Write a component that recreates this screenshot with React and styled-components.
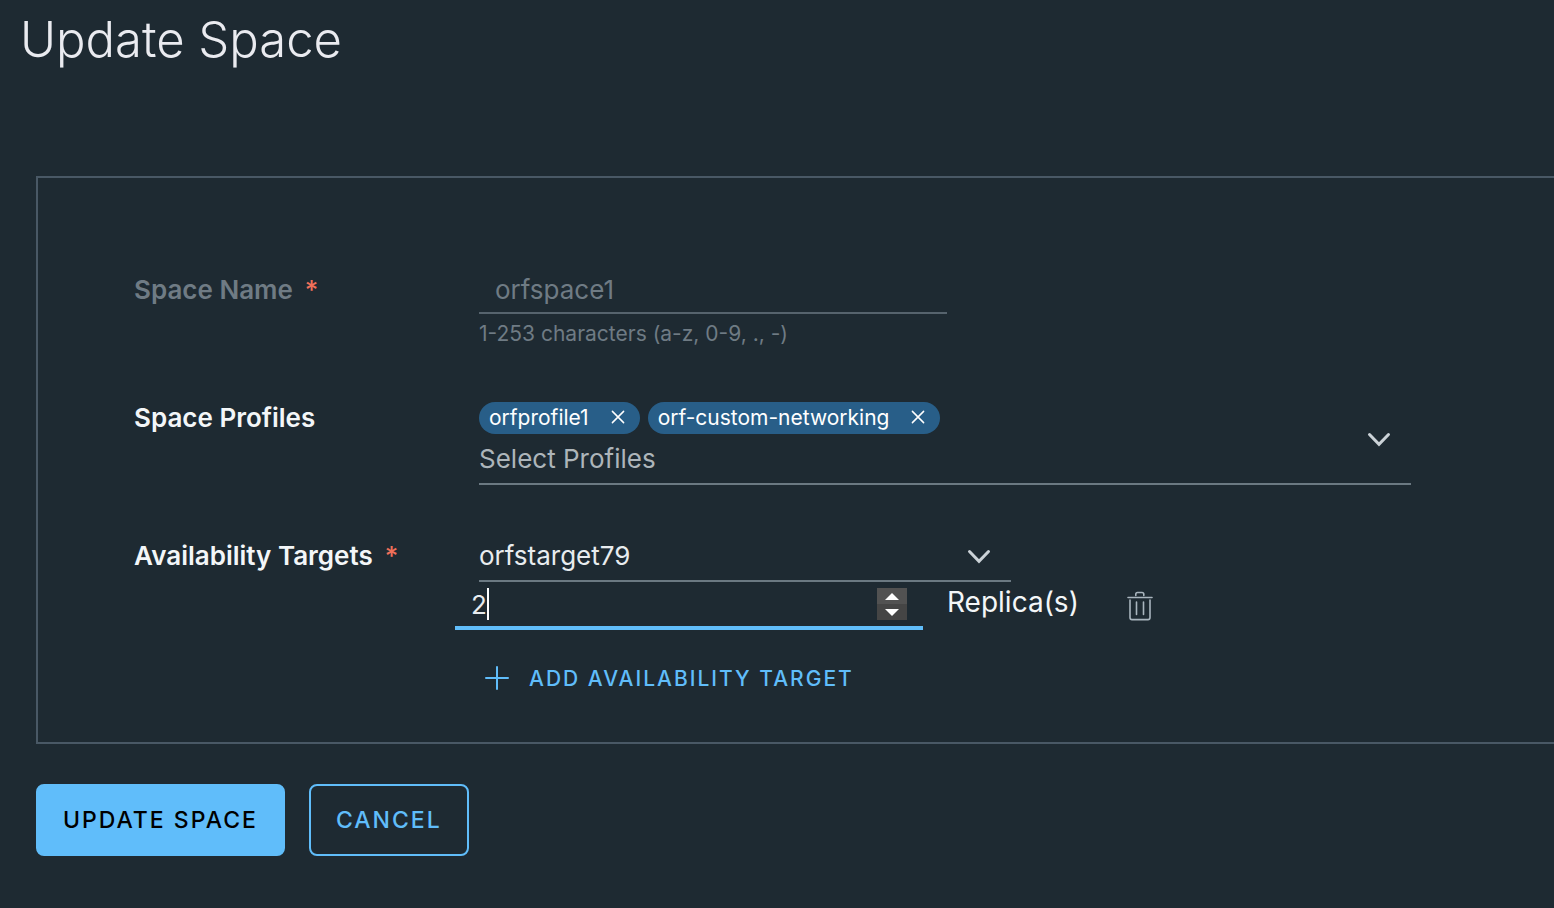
import React, { useState } from "react";
import styled, { createGlobalStyle } from "styled-components";

const GlobalStyle = createGlobalStyle`
  * { box-sizing: border-box; }
  body {
    margin: 0;
    background: #1e2a32;
    color: #f3f6f8;
    font-family: Inter, "Noto Sans", sans-serif;
    font-size: 26px;
  }
  button, input, select { font: inherit; color: inherit; }
`;

const Page = styled.main`
  min-height: 100vh;
  padding: 16px 0 48px 36px;
`;

const Title = styled.h1`
  margin: 0 0 112px -16px;
  color: #eaebf0;
  font-size: 49px;
  line-height: 48px;
  font-weight: 300;
`;

const Panel = styled.section`
  border: 2px solid #495865;
  border-right: 0;
  padding: 88px 24px 40px 96px;
`;

const Field = styled.div`
  display: grid;
  grid-template-columns: 345px minmax(0, 1fr);
  margin-bottom: ${(p) => p.$gap || 0}px;
`;

const Label = styled.label`
  display: flex;
  gap: 12px;
  padding-top: ${(p) => p.$top || 0}px;
  line-height: 32px;
  font-weight: 600;
  color: ${(p) => (p.$muted ? "#6f7b84" : "#f3f6f8")};
`;

const Star = styled.span`
  color: #f0705a;
  font-weight: 500;
`;

const TextInput = styled.input`
  display: block;
  width: 100%;
  max-width: 468px;
  height: 48px;
  padding: 0 16px;
  border: 0;
  border-bottom: 2px solid #56636d;
  background: transparent;
  color: #6f7b84;
  outline: none;
`;

const Hint = styled.p`
  margin: 4px 0 0;
  color: #6f7b84;
  font-size: 21px;
  line-height: 32px;
`;

const Combo = styled.div`
  display: flex;
  align-items: center;
  width: 100%;
  max-width: 932px;
  padding-right: 20px;
  border-bottom: 2px solid #6b7982;
`;

const ComboBody = styled.div`
  flex: 1;
  min-width: 0;
`;

const Chips = styled.div`
  display: flex;
  flex-wrap: wrap;
  gap: 8px;
`;

const Chip = styled.span`
  display: flex;
  align-items: center;
  gap: 21px;
  height: 32px;
  padding: 0 14px 0 10px;
  border-radius: 16px;
  background: #285e88;
  color: #fff;
  font-size: 21px;
  line-height: 32px;
`;

const IconButton = styled.button`
  display: flex;
  align-items: center;
  padding: 0;
  border: 0;
  background: none;
  color: ${(p) => p.$color || "inherit"};
  cursor: pointer;
`;

const ComboToggle = styled(IconButton)`
  padding-bottom: 8px;
`;

const ComboInput = styled.input`
  display: block;
  width: 100%;
  height: 49px;
  padding: 0;
  border: 0;
  background: transparent;
  outline: none;
  &::placeholder { color: #adb5ba; opacity: 1; }
`;

const SelectBox = styled.div`
  display: grid;
  align-items: center;
  max-width: 532px;
  border-bottom: 2px solid #6b7982;
  > * { grid-area: 1 / 1; }
  > svg { justify-self: end; margin-right: 20px; pointer-events: none; }
`;

const Select = styled.select`
  width: 100%;
  height: 48px;
  padding: 0 48px 2px 0;
  border: 0;
  background: transparent;
  color: #e8ecef;
  appearance: none;
  outline: none;
`;

const ReplicaRow = styled.div`
  display: flex;
  gap: 24px;
  margin-left: -24px;
`;

const NumberBox = styled.div`
  display: flex;
  align-items: center;
  width: 468px;
  height: 48px;
  padding: 0 16px;
  border-bottom: 4px solid #60bdfa;
`;

const NumberInput = styled.input`
  field-sizing: content;
  padding: 0;
  border: 0;
  background: transparent;
  color: #e8ecef;
  outline: none;
  caret-color: transparent;
  appearance: textfield;
  &::-webkit-inner-spin-button { display: none; }
`;

const Caret = styled.span`
  width: 2px;
  height: 32px;
  background: #fff;
`;

const Stepper = styled.div`
  display: grid;
  margin-left: auto;
`;

const Step = styled.button`
  display: flex;
  align-items: center;
  justify-content: center;
  width: 30px;
  height: 16px;
  padding: 0;
  border: 0;
  background: ${(p) => (p.$down ? "#454545" : "#525252")};
  color: #fff;
`;

const Unit = styled.label`
  padding-right: 24px;
  font-size: 28px;
  line-height: 40px;
`;

const AddButton = styled.button`
  display: flex;
  align-items: center;
  gap: 20px;
  height: 48px;
  margin: 24px 0 0;
  padding: 0 6px;
  border: 0;
  background: none;
  color: #60bdfa;
  font-size: 21px;
  font-weight: 500;
  letter-spacing: 2px;
  cursor: pointer;
`;

const Actions = styled.div`
  display: flex;
  gap: 24px;
  margin-top: 40px;
`;

const Button = styled.button`
  height: 72px;
  padding: 0 25px;
  border: 2px solid #60bdfa;
  border-radius: 8px;
  background: ${(p) => (p.$primary ? "#60bdfa" : "transparent")};
  color: ${(p) => (p.$primary ? "#000" : "#60bdfa")};
  font-size: 23px;
  font-weight: 500;
  letter-spacing: 2px;
  cursor: pointer;
`;

const Chevron = () => (
  <svg width="24" height="16" viewBox="0 0 24 16" fill="none" stroke="#cbd2d7" strokeWidth="3" strokeLinecap="round">
    <path d="M2.5 3.5 L12 13.3 L21.5 3.5" />
  </svg>
);

const Cross = () => (
  <svg width="16" height="16" viewBox="0 0 16 16" fill="none" stroke="currentColor" strokeWidth="1.5" strokeLinecap="round">
    <path d="M2.4 1.4 L13.6 12.6 M13.6 1.4 L2.4 12.6" />
  </svg>
);

const Plus = () => (
  <svg width="24" height="24" viewBox="0 0 24 24" fill="none" stroke="currentColor" strokeWidth="2" strokeLinecap="round">
    <path d="M12 1 V23 M1 12 H23" />
  </svg>
);

const Trash = () => (
  <svg width="26" height="30" viewBox="0 0 26 30" fill="none" stroke="currentColor" strokeWidth="1.6" strokeLinecap="round">
    <path d="M1 6.5 H25 M3 9 V26.5 Q3 28.6 5 28.6 H21 Q23 28.6 23 26.5 V9 M9.5 11 V23.5 M16.5 11 V23.5 M8.8 4.5 V3.2 Q8.8 1.5 10.5 1.5 H15 Q16.8 1.5 16.8 3.2 V4.5" />
  </svg>
);

const Arrow = ({ down }) => (
  <svg width="14" height="7" viewBox="0 0 14 7" fill="currentColor">
    <path d={down ? "M0 0 H14 L7 7 Z" : "M0 7 H14 L7 0 Z"} />
  </svg>
);

export default function App() {
  const [profiles, setProfiles] = useState(["orfprofile1", "orf-custom-networking"]);
  const [replicas, setReplicas] = useState(2);

  return (
    <Page>
      <GlobalStyle />
      <Title>Update Space</Title>
      <Panel>
        <Field $gap={52}>
          <Label htmlFor="name" $top={8} $muted>
            Space Name <Star>*</Star>
          </Label>
          <div>
            <TextInput id="name" defaultValue="orfspace1" disabled />
            <Hint>1-253 characters (a-z, 0-9, ., -)</Hint>
          </div>
        </Field>

        <Field $gap={47}>
          <Label htmlFor="profiles">Space Profiles</Label>
          <Combo>
            <ComboBody>
              <Chips>
                {profiles.map((name) => (
                  <Chip key={name}>
                    {name}
                    <IconButton
                      type="button"
                      aria-label={`Remove ${name}`}
                      onClick={() => setProfiles(profiles.filter((p) => p !== name))}
                    >
                      <Cross />
                    </IconButton>
                  </Chip>
                ))}
              </Chips>
              <ComboInput id="profiles" placeholder="Select Profiles" />
            </ComboBody>
            <ComboToggle type="button" aria-label="Open profiles">
              <Chevron />
            </ComboToggle>
          </Combo>
        </Field>

        <Field>
          <Label htmlFor="target" $top={8}>
            Availability Targets <Star>*</Star>
          </Label>
          <div>
            <SelectBox>
              <Select id="target" defaultValue="orfstarget79">
                <option>orfstarget79</option>
              </Select>
              <Chevron />
            </SelectBox>
            <ReplicaRow>
              <NumberBox>
                <NumberInput
                  id="replicas"
                  type="number"
                  value={replicas}
                  onChange={(e) => setReplicas(Number(e.target.value))}
                />
                <Caret />
                <Stepper>
                  <Step type="button" aria-label="Increase" onClick={() => setReplicas(replicas + 1)}>
                    <Arrow />
                  </Step>
                  <Step type="button" aria-label="Decrease" $down onClick={() => setReplicas(replicas - 1)}>
                    <Arrow down />
                  </Step>
                </Stepper>
              </NumberBox>
              <Unit htmlFor="replicas">Replica(s)</Unit>
              <IconButton type="button" aria-label="Delete target" $color="#a9b5be">
                <Trash />
              </IconButton>
            </ReplicaRow>
            <AddButton type="button">
              <Plus />
              ADD AVAILABILITY TARGET
            </AddButton>
          </div>
        </Field>
      </Panel>
      <Actions>
        <Button type="submit" $primary>UPDATE SPACE</Button>
        <Button type="button">CANCEL</Button>
      </Actions>
    </Page>
  );
}
